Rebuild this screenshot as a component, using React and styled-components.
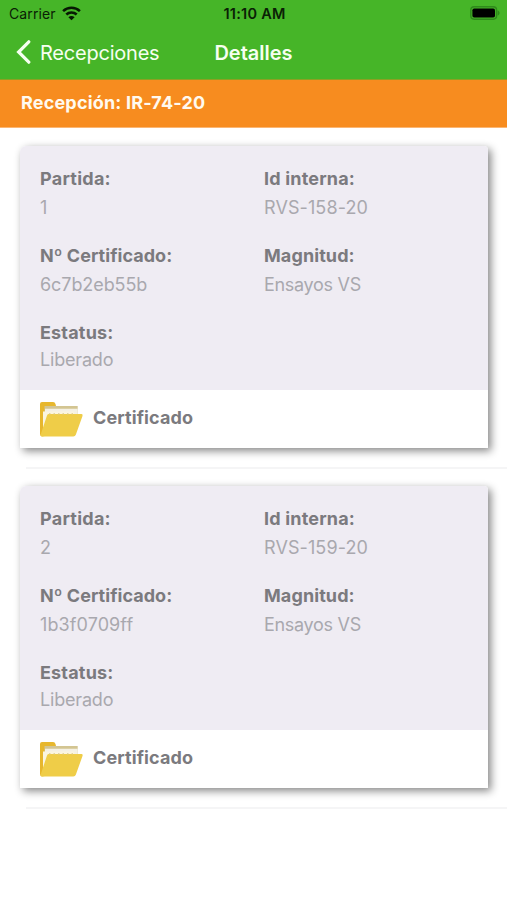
import React from 'react';
import styled, { createGlobalStyle } from 'styled-components';

const GlobalStyle = createGlobalStyle`
  * { box-sizing: border-box; }
  body {
    margin: 0;
    background: #fff;
    font-family: Inter, "Liberation Sans", sans-serif;
  }
`;

const Screen = styled.div`
  width: 507px;
  height: 900px;
  overflow: hidden;
  background: #fff;
`;

const Header = styled.header`
  height: 80px;
  background: #46b528;
  border-bottom: 1px solid #8fa022;
`;

const StatusBar = styled.div`
  display: grid;
  grid-template-columns: 1fr auto 1fr;
  align-items: center;
  height: 27px;
  padding: 0 7px 0 9px;
  color: #0a2005;
  font-size: 14px;
  line-height: 27px;
`;

const Carrier = styled.div`
  display: flex;
  align-items: center;
  gap: 6px;
  letter-spacing: 0.1px;

  svg {
    margin-top: -1px;
  }
`;

const Clock = styled.div`
  font-weight: 600;
  font-size: 14.5px;
  letter-spacing: 0.25px;
`;

const BatterySlot = styled.div`
  display: flex;
  justify-content: flex-end;
  margin-top: -1px;
`;

const NavBar = styled.div`
  display: grid;
  grid-template-columns: 1fr auto 1fr;
  align-items: center;
  height: 51px;
  padding: 0 16px;
  color: #f6fff0;
  font-size: 20px;
`;

const Back = styled.div`
  display: flex;
  align-items: center;
  gap: 9px;
  letter-spacing: -0.22px;

  svg {
    margin-top: -1px;
  }
`;

const Title = styled.div`
  font-weight: 600;
`;

const Banner = styled.div`
  height: 48px;
  padding-left: 21px;
  background: #f78c1f;
  border-bottom: 1px solid #fbb673;
  color: #fffaf0;
  font-size: 18px;
  font-weight: 700;
  line-height: 46px;
  letter-spacing: 0.18px;
`;

const Item = styled.section`
  height: 340px;
  padding: 18px 19px 0 20px;
`;

const Card = styled.article`
  height: 302px;
  background: #fff;
  border-radius: 6px 4px 0 0;
  box-shadow: 3px 3px 8px rgba(0, 0, 0, 0.48);
`;

const Fields = styled.div`
  display: grid;
  grid-template-columns: 224px 1fr;
  grid-auto-rows: 77px;
  height: 244px;
  padding: 22px 20px 0;
  background: #efecf3;
  border-radius: 6px 4px 0 0;
`;

const Label = styled.div`
  color: #7b7a7e;
  font-size: 18px;
  font-weight: 700;
  line-height: 22px;
  letter-spacing: ${(p) => p.$spacing ?? 0.1}px;
`;

const Value = styled.div`
  margin-top: ${(p) => (p.$tight ? 5 : 7)}px;
  color: #a9a8ae;
  font-size: 18px;
  line-height: 22px;
  letter-spacing: ${(p) => p.$spacing || 0}px;
`;

const Footer = styled.div`
  display: flex;
  align-items: center;
  gap: 9px;
  height: 58px;
  padding: 0 0 2px 19px;

  svg {
    margin-top: 2px;
  }
`;

const Separator = styled.div`
  height: 2px;
  margin: 19px -19px 0 6px;
  background: #f5f5f6;
`;

const WifiIcon = () => (
  <svg width="19" height="15" viewBox="0 0 19 15" fill="none" stroke="#071803" strokeWidth="2.6">
    <path d="M1.1 5.1C5.8.7 13.2.7 17.9 5.1" />
    <path d="M4.3 8.5c2.9-2.7 7.5-2.7 10.4 0" />
    <path d="M9.5 14.3 6.4 11.2c1.7-1.5 4.5-1.5 6.2 0z" fill="#071803" stroke="none" />
  </svg>
);

const BatteryIcon = () => (
  <svg width="30" height="14" viewBox="0 0 30 14">
    <rect x="0.8" y="0.8" width="25.8" height="12.4" rx="3.4" fill="none" stroke="#2f8a1b" strokeWidth="1.4" />
    <rect x="2.4" y="2.4" width="22.6" height="9.2" rx="1.8" fill="#000" />
    <path d="M27.6 4.5c2.6.6 2.6 4.4 0 5z" fill="#2f8a1b" />
  </svg>
);

const ChevronIcon = () => (
  <svg width="15" height="24" viewBox="0 0 15 24" fill="none" stroke="#f6fff0" strokeWidth="3.2">
    <path d="M12.8 1.8 2.6 12l10.2 10.2" strokeLinecap="round" strokeLinejoin="miter" />
  </svg>
);

const FolderIcon = () => (
  <svg width="45" height="36" viewBox="0 0 45 36">
    <path d="M1 3Q1 1 3 1h11q2 0 2.5 2l.5 2h6v27L3 35.5Q1 35 1 33z" fill="#e7b72d" />
    <path d="M5.5 5h33.2v8H5.5z" fill="#d3c592" />
    <path d="M6 7.8h32.7v6H6z" fill="#f5f1e4" />
    <path d="M4 10.5h31V24L4 31z" fill="#fbf5df" />
    <path d="M9.5 13h33q1.6 0 1 2L36.8 33.8q-.6 1.7-2.5 1.7H3q-2 0-1.3-2L8 14.5Q8.4 13 9.5 13z" fill="#efcd48" />
    <path d="M10 12.8h24" stroke="#dccb8c" strokeWidth="1.2" strokeDasharray="1.5 3" />
  </svg>
);

const Field = ({ label, value, labelSpacing, valueSpacing, tight }) => (
  <div>
    <Label $spacing={labelSpacing}>{label}</Label>
    <Value $spacing={valueSpacing} $tight={tight}>{value}</Value>
  </div>
);

const items = [
  { partida: '1', id: 'RVS-158-20', certificado: '6c7b2eb55b', certSpacing: -0.08 },
  { partida: '2', id: 'RVS-159-20', certificado: '1b3f0709ff', certSpacing: 0.1 },
];

export default function App() {
  return (
    <Screen>
      <GlobalStyle />
      <Header>
        <StatusBar>
          <Carrier>Carrier <WifiIcon /></Carrier>
          <Clock>11:10 AM</Clock>
          <BatterySlot><BatteryIcon /></BatterySlot>
        </StatusBar>
        <NavBar>
          <Back><ChevronIcon />Recepciones</Back>
          <Title>Detalles</Title>
        </NavBar>
      </Header>
      <Banner>Recepción: IR-74-20</Banner>
      {items.map((item) => (
        <Item key={item.id}>
          <Card>
            <Fields>
              <Field label="Partida:" value={item.partida} labelSpacing={0.25} />
              <Field label="Id interna:" value={item.id} labelSpacing={0.18} valueSpacing={0.1} />
              <Field
                label="Nº Certificado:"
                value={item.certificado}
                labelSpacing={0.04}
                valueSpacing={item.certSpacing}
              />
              <Field label="Magnitud:" value="Ensayos VS" valueSpacing={-0.3} />
              <Field label="Estatus:" value="Liberado" labelSpacing={0.18} valueSpacing={-0.18} tight />
            </Fields>
            <Footer>
              <FolderIcon />
              <Label>Certificado</Label>
            </Footer>
          </Card>
          <Separator />
        </Item>
      ))}
    </Screen>
  );
}
